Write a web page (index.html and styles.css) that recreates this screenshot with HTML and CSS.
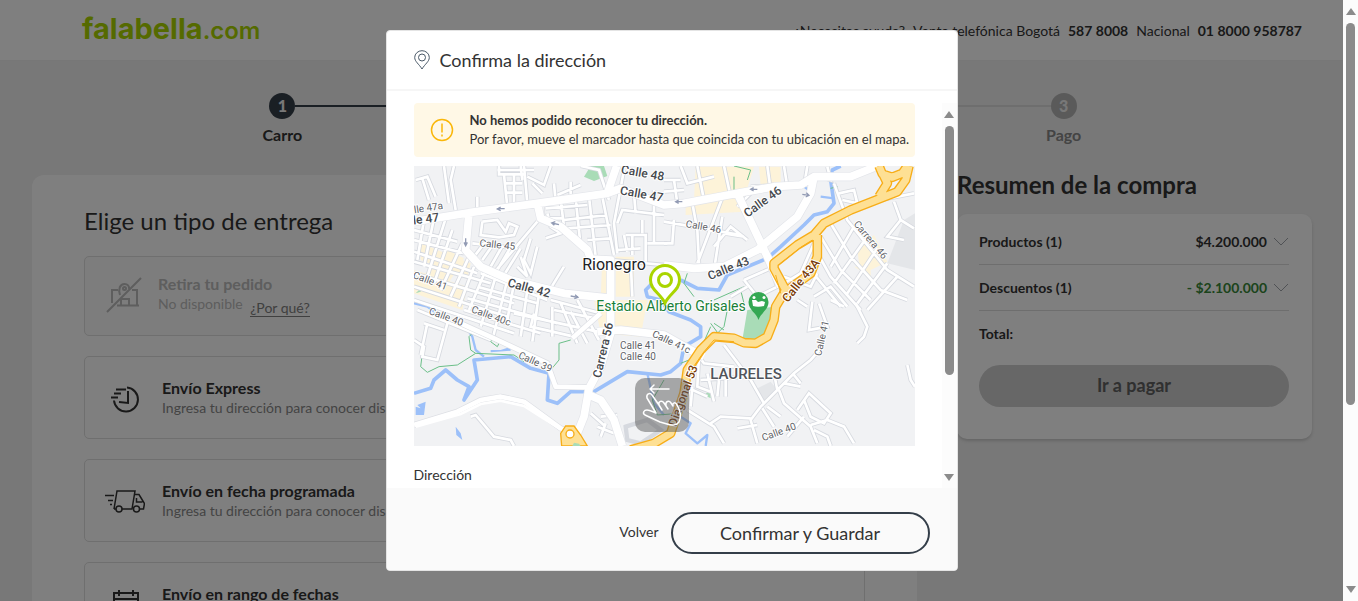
FILE: index.html
```html
<!DOCTYPE html>
<html lang="es">
<head>
<meta charset="utf-8">
<title>falabella.com</title>
<link rel="stylesheet" href="styles.css">
</head>
<body>
<div class="page">
  <header class="topbar">
    <a class="logo" href="#">falabella<span class="logo-com">.com</span></a>
    <div class="help"><span>¿Necesitas ayuda?</span><span>Venta telefónica Bogotá</span><b>587 8008</b><span>Nacional</span><b>01 8000 958787</b></div>
  </header>
  <ol class="steps">
    <li class="step done"><span class="dot">1</span><span>Carro</span></li>
    <li class="step done"><span class="dot"></span></li>
    <li class="step"><span class="dot">3</span><span>Pago</span></li>
  </ol>
  <main class="columns">
    <section class="delivery">
      <h1>Elige un tipo de entrega</h1>
      <div class="option disabled">
        <svg class="icon store" width="36" height="36" viewBox="0 0 36 36"><path d="M1 35 35 1M6 26V13h6M26 13h5v15M11 28.500h22M15 28v-6h8v6" /><path d="M14 18c-2-6 0-11 4.500-11 3 0 5 2 4.500 5"/><circle cx="18.500" cy="11.500" r="1.500"/></svg>
        <div><h2>Retira tu pedido</h2><p>No disponible <a class="why" href="#">¿Por qué?</a></p></div>
      </div>
      <div class="option">
        <svg class="icon express" width="32" height="32" viewBox="0 0 32 32"><path d="M17 5.500a12 12 0 1 1-13 13M18 9v12l-9-1M6 7.500h10M4 11.500h7M1 15.500h7"/></svg>
        <div><h2>Envío Express</h2><p>Ingresa tu dirección para conocer disponibilidad</p></div>
      </div>
      <div class="option">
        <svg class="icon truck" width="40" height="26" viewBox="0 0 40 26"><path d="M9 21 12 3h18l-3 18H17M11 21H9M29 6.500h5l3 5 2.500 4-1 5.500h-3.500M31.500 10v4h6M0 7.500h9M3 12.500h5M5 16.500h2"/><circle cx="14" cy="21" r="3"/><circle cx="31.500" cy="21" r="3"/></svg>
        <div><h2>Envío en fecha programada</h2><p>Ingresa tu dirección para conocer disponibilidad</p></div>
      </div>
      <div class="option">
        <svg class="icon calendar" width="28" height="28" viewBox="0 0 28 28"><path d="M2 3h24v23H2zM2 9h24M7 0v6M21 0v6"/></svg>
        <div><h2>Envío en rango de fechas</h2><p>Ingresa tu dirección para conocer disponibilidad</p></div>
      </div>
    </section>
    <aside class="summary">
      <h2>Resumen de la compra</h2>
      <div class="summary-card">
        <div class="line"><span>Productos (1)</span><span class="amount">$4.200.000</span><svg width="16" height="10" viewBox="0 0 16 10"><path d="m1 1 7 7 7-7"/></svg></div>
        <div class="line"><span>Descuentos (1)</span><span class="amount saving">- $2.100.000</span><svg width="16" height="10" viewBox="0 0 16 10"><path d="m1 1 7 7 7-7"/></svg></div>
        <div class="line"><span>Total:</span></div>
        <button class="pay" type="button" disabled>Ir a pagar</button>
      </div>
    </aside>
  </main>

  <div class="overlay">
    <div class="modal" role="dialog" aria-labelledby="modal-title">
      <div class="modal-head">
        <svg width="16" height="20" viewBox="0 0 16 20"><path d="M8 19C5 14 .7 11.500.7 7.500a7.300 6.800 0 0 1 14.600 0C15.300 11.500 11 14 8 19z"/><circle cx="8" cy="7.500" r="3.500"/></svg>
        <h2 id="modal-title">Confirma la dirección</h2>
      </div>
      <div class="modal-body">
        <div class="modal-content">
          <div class="notice">
            <svg width="24" height="24" viewBox="0 0 24 24"><circle cx="12" cy="12" r="10.500"/><path d="M12 5.500v9M12 16.500v2"/></svg>
            <div><strong>No hemos podido reconocer tu dirección.</strong><p>Por favor, mueve el marcador hasta que coincida con tu ubicación en el mapa.</p></div>
          </div>
          <svg class="map" viewBox="0 0 501 280" role="img" aria-label="Mapa de Rionegro">
            <defs>
              <path id="minor" d="M90 18 105 130M120 18 110 60 125 150M5 60 40 50 65 110M25 55 45 120M190 110v45M250 30h110M255 18v25h75M270 45 280 140M320 18 325 60M300 45v90M330 18 340 130M275 70h50M275 98h50M340 50 390 75 410 18M355 70 385 100M420 70 425 125M470 65v45M430 105 500 75M385 140v35h60M400 160 410 200 440 220 395 235M440 120 450 200M485 115 500 260M525 110 545 290M565 110 600 285M395 145 520 135M450 180 580 165M460 205 590 195M520 240 590 235M205 185 200 225 255 232 300 225 310 200 285 190 275 215 250 180 205 185M370 185 230 350M175 250 310 265M215 245 180 290M240 250 205 300M265 258 230 320M290 262 250 330M320 265 270 345M350 235 330 300 350 340 370 260M320 290 340 350 310 320M410 385 450 320M585 120 555 30 500 18M630 30 600 190 610 280M610 190 625 150 750 165M660 100 665 160M630 225 640 275M635 225h60v80M655 225v60M685 180v40M720 90v160M700 250h60M610 270 680 265M590 300 750 315M650 300 655 410"/>
              <path id="left" d="M0 210 130 245M0 240 150 280M30 180 10 300M60 175 30 320M95 175 40 350M115 210 60 370M145 250 80 390M165 290 110 410M180 320 135 440M215 330 165 450M245 350 200 500M280 360 235 540M0 275 190 340M0 305 230 370M0 340 300 430M0 380 280 470M0 420 300 520M10 450 230 540M300 370 280 480M340 390 320 530M375 400 355 545M200 340 400 420M190 380 370 430M160 415 430 490M150 450 380 520M300 460 550 515M415 440v90M440 430 490 550M470 455 520 550M490 420 555 540M360 460 350 500 480 530M420 450 545 475M410 420 560 460M0 540 30 560 25 590 70 600 100 490M30 490 90 510M40 490 20 585"/>
              <path id="east" d="M800 18 820 70 900 50M850 18 870 120M750 60 800 60M750 95 810 90M780 60 790 130M930 18 950 110M1060 18 1070 90M1110 18 1120 80M1180 18 1170 80M1010 80 1100 75M835 130 850 210 855 310M930 100 850 310M925 170 900 330M750 185 980 225M900 260 950 200 1000 240M780 180 775 250 750 250M930 220 990 230M970 140 1030 80M1200 45 1250 60 1240 20M1260 70 1300 180 1420 330 1500 380M1275 100 1320 90 1330 130 1285 120M1400 120 1500 100M1440 125 1460 180 1420 230 1470 240M1460 180 1500 205M1250 190 1310 290 1400 390 1480 420M1220 230 1280 330 1370 420M1200 260 1250 350 1340 450M1190 330 1280 440M1320 200 1250 320M1360 230 1260 370M1390 265 1300 400M1420 310 1330 430M1450 350 1360 450M1110 370 1160 340 1200 250M1110 350 1190 380 1210 340M1200 410 1250 380 1300 440M990 360 1070 325 1090 380 1030 410 990 360M950 410 1000 380"/>
              <path id="south" d="M1195 425 1185 510 1240 500 1215 430M1180 440 1150 420M1225 560 1190 600 1140 640 1090 690 1040 740 1010 780 1030 850M930 555 1010 660 1050 730M960 620 870 610 855 590M855 590 850 680 890 695M860 660 1000 650M915 660 910 710M935 660 935 710M880 640 900 725M835 680 830 740M815 680 880 710M820 750 900 800 930 850M890 790 920 770 1010 775M970 805 1030 795M1060 740 1100 770M1045 745 1080 800M1095 690 1110 730 1190 800 1210 850M1150 750 1185 700 1250 760 1230 790 1190 770 1170 720M1170 770 1120 830M1190 795 1240 780 1290 800 1320 850M1200 810 1240 830 1250 858M1090 690 1080 640M1140 645 1160 670M1110 670 1160 680M1325 430 1360 500 1350 530 1330 550M1250 420 1290 440M1480 615 1490 660 1503 680M530 760 575 800M560 770 610 765M550 800 600 820M575 790 560 830"/>
              <path id="major" d="M0 185 165 158 370 130 580 100 608 18M580 100 620 85 750 135 810 130 970 100 1080 80 1160 75 1200 50 1310 50 1390 18M165 160 155 270 200 320 290 360 450 400 590 415M370 130 380 175 440 200 520 270 530 297 590 300 590 520 560 620 525 685 510 770 490 820M525 705 560 720 600 780 625 858M750 315 840 325 930 320 1030 270 1150 170 1190 100 1200 50M970 100 1060 290 1100 380M550 515 620 510 750 525 830 570 870 590"/>
              <path id="valley" d="M0 795 130 755 200 720 260 710 330 725 440 805 480 820M140 490 240 535 400 610 425 680 520 682M560 460 475 535"/>
              <path id="highway" d="M1485 18 1475 60 1450 95 1310 150 1230 190 1200 225 1150 255 1080 310 1080 325 1115 390 1085 440 1080 480 1060 530 1025 550 990 548 960 535 900 530 860 570 820 630 810 700 770 820 720 850 650 870M1210 225 1210 290 1190 340 1115 395M1395 18 1405 42 1435 52 1465 40 1480 18M1408 45 1420 70 1395 110"/>
            </defs>
            <rect width="501" height="280" class="land"/>
            <g transform="translate(0 -6) scale(.33333)">
              <path class="cream" d="M845 20h175l-20 65-160 35zM815 125l175-20v50l-175 10zM1035 20h65v60h-60zM565 290h35v150l-40-20zM605 290h55v120h-55zM540 420h160l-20 110-120-10zM20 250l150 60-10 45-140-55zM0 330l160 50-15 70-145-50zM100 270l50 25-50 80-70-30zM1330 270l50-45 40 80-80 40zM1320 320h50v30z"/>
              <path class="gray-area" d="M1420 310 1470 180 1503 160v170zM1020 690l50-25 20 25-40 40z"/>
              <path class="park" d="M510 50 530 18h40l10 30-40 15zM985 540 1000 450 1080 440 1070 500 1045 545zM5 400l20-20-5 15zM870 705l20-15v25z"/>
              <path class="river" d="M1280 18 1255 30 1250 60 1260 130 1240 155 1200 165 1170 195 1100 260 1060 295 940 345 915 390 850 385 800 360M720 365 695 390 700 410 740 420 765 455 830 480 860 500 860 530 810 560 800 610 770 635 740 645 640 635 540 695 470 695 430 730 400 720 405 640 350 625 290 590 180 600 190 660 150 720 165 680 130 660 95 630 60 660 50 685 0 700"/>
              <path class="river thin" d="M0 430 40 440 80 470M155 500 175 530 185 570 210 590M800 770 830 790 815 820 850 850 880 825 875 858M1170 80 1190 95M1220 110 1260 115M700 640 720 730 750 765"/>
              <path class="water" d="M10 735 35 725 30 765 5 765 5 740 20 745zM125 800l15 20 5 20-18-15zM230 570h30l30-10v12l-60 5z"/>
              <path class="trail" d="M960 18 1010 30 1000 60M960 50v60M185 510 165 530 170 570 185 580 300 585 330 605M185 580 130 615 75 620 40 637 20 620 25 580 30 555M470 540 435 550 435 600 410 630 430 680 520 690M230 545 250 560 255 550 235 540zM820 340 810 370 840 410M900 420 990 380M980 390 990 430M940 450 930 500 890 540M900 490 930 510M890 490 920 530M890 500 850 590 800 610M750 660 715 720 730 765 800 760M1260 70 1270 80 1250 85"/>
              <g class="case"><use href="#minor"/><use href="#left"/><use href="#east"/><use href="#south"/></g>
              <g class="street"><use href="#minor"/><use href="#left"/><use href="#east"/><use href="#south"/></g>
              <use href="#major" class="major-case"/><use href="#valley" class="valley-case"/><use href="#valley" class="valley"/><use href="#major" class="major"/>
              <path class="lane" d="M5 800 140 762 200 732 260 722 330 738 440 808"/>
              <path class="case" d="M170 770 185 765 240 830 290 840 300 858M635 800 700 780 740 810 680 850 640 840z"/>
              <path class="lane" d="M170 770 185 765 240 830 290 840 300 858"/>
              <use href="#highway" class="highway-case"/><use href="#highway" class="highway"/>
              <path class="divider" d="M960 545 900 540 870 575 835 625M1100 400 1085 345M1195 240 1160 262 1100 310"/>
              <path class="blob" d="M443 858 440 820 455 798 480 798 500 825 520 858z"/><circle class="hole" cx="468" cy="822" r="12"/><path class="park" d="M475 858l5-10 15 3 5 7z"/>
              <path class="arrow" d="M272 146h-22m10-5-10 6 10 5M435 194l-22-5m11-4-11 4 8 7M155 235v22m-5-10 5 10 5-10M470 408l22 4m-9-8 9 8-11 4M805 125h-20m9-5-9 5 9 5M1030 88h-20m9-5-9 5 9 5M1165 103l20 3m-8-8 8 8-10 5"/>
            </g>
            <g class="labels strong">
              <text transform="translate(228 11) rotate(10)">Calle 48</text><text transform="translate(227 32) rotate(10)">Calle 47</text><text transform="translate(11 57) rotate(-7)">lle 47</text><text transform="translate(114 126) rotate(15)">Calle 42</text><text transform="translate(351 39) rotate(-36)">Calle 46</text><text transform="translate(316 106) rotate(-22)">Calle 43</text><text transform="translate(193 185) rotate(-77)">Carrera 56</text>
            </g>
            <g class="labels">
              <text transform="translate(15 45) rotate(-9)">lle 47a</text><text transform="translate(83 82) rotate(6)">Calle 45</text><text transform="translate(15 118) rotate(20)">Calle 41</text><text transform="translate(31 154) rotate(20)">Calle 40</text><text transform="translate(76 153) rotate(20)">Calle 40c</text><text transform="translate(120 199) rotate(24)">Calle 39</text><text x="224" y="183">Calle 41</text><text x="224" y="194">Calle 40</text><text transform="translate(256 179) rotate(25)">Calle 41c</text><text transform="translate(289 64) rotate(10)">Calle 46</text><text transform="translate(454 76) rotate(50)">Carrera 46</text><text transform="translate(411 173) rotate(-77)">Calle 41</text><text transform="translate(366 269) rotate(-20)">Calle 40</text>
            </g>
            <g class="labels brown"><text transform="translate(390 117) rotate(-51)">Calle 43A</text><text transform="translate(273 231) rotate(-70)">Diagonal 53</text></g>
            <text class="town" x="200" y="104">Rionegro</text>
            <text class="district" x="332" y="213">LAURELES</text>
            <text class="poi" x="257" y="145">Estadio Alberto Grisales</text>
            <path class="poi-pin" d="M344.500 154c-2-7-10-10-10-18a10 10 0 0 1 20 0c0 8-8 11-10 18z"/>
            <path class="poi-mark" d="M338 134h4l2 2 4-1 3 1-1 4c-4 1-8 1-11 0zM346 133l4-1"/><circle class="poi-dot" cx="350" cy="131.500" r="1.500"/><circle class="poi-dot" cx="340" cy="131.500" r="1.500"/>
            <path class="marker" d="M251 137c-5-10-14.500-13-14.500-23a14.500 14.500 0 0 1 29 0c0 10-9.500 13-14.500 23z"/><circle class="marker-ring" cx="251" cy="114" r="6.500"/>
            <rect class="hand-box" x="221" y="212" width="54" height="54" rx="10"/>
            <path class="hand" d="M255 223h-19m4-4-4 4 4 4M242 247l-9-15c-1-4 3-6 5-3l7 10c-1-4 3-5 5-2l2 3c-1-5 3-6 5-3l2 3c-1-4 3-4 4-1 3 5 5 11 2 17-2 3-7 4-12 2l-7-2-15-7c-3-2-1-5 2-5 3 0 6 2 9 3zM245 239l3 5M252 240l2 3"/>
          </svg>
          <label class="field" for="address">Dirección</label>
          <input class="address" id="address" type="text">
        </div>
        <div class="scroll inner" aria-hidden="true"><i class="up"></i><i class="thumb"></i><i class="down"></i></div>
      </div>
      <div class="modal-foot">
        <button class="back" type="button">Volver</button>
        <button class="confirm" type="button">Confirmar y Guardar</button>
      </div>
    </div>
  </div>
</div>
<div class="scroll outer" aria-hidden="true"><i class="up"></i><i class="thumb"></i><i class="down"></i></div>
</body>
</html>
```

FILE: styles.css
```css
* { box-sizing: border-box; margin: 0; padding: 0; }
body { display: flex; height: 100vh; overflow: hidden; font: 14px/20px Lato, "Liberation Sans", sans-serif; color: #333; }
button { font: inherit; color: inherit; border: 0; background: none; }
svg { fill: none; flex: none; }
.page { position: relative; flex: 1; min-width: 0; overflow: hidden; background: #f0f0f0; }

.topbar { display: flex; align-items: center; justify-content: space-between; height: 61px; padding: 0 41px 0 82px; background: #fff; border-bottom: 1px solid #eee; }
.logo { font-family: Inter, Lato, sans-serif; font-weight: 700; font-size: 29px; line-height: 32px; color: #aad500; text-decoration: none; }
.logo-com { font-size: 24px; font-weight: 600; }
.help { display: flex; gap: 8px; padding-top: 2px; }

.steps { display: flex; list-style: none; padding: 32px 84px 0 87px; height: 114px; }
.step { position: relative; flex: 1; display: flex; flex-direction: column; align-items: center; gap: 6px; font-size: 16px; font-weight: 700; color: #888; }
.dot { width: 26px; height: 26px; border-radius: 50%; background: #b4b4b4; color: #f0f0f0; font-weight: 900; line-height: 26px; text-align: center; }
.done { color: #333; }
.done .dot { background: #343e49; }
.step:not(:last-child)::after { content: ""; position: absolute; top: 12px; left: calc(50% + 13px); right: calc(13px - 50%); height: 2px; background: #343e49; }
.step:nth-child(2)::after { background: #dcdcdc; }

.columns { display: flex; align-items: flex-start; gap: 40px; padding: 0 31px 0 32px; }
.delivery { flex: 1; display: flex; flex-direction: column; gap: 20px; min-height: 500px; padding: 31px 52px; background: #fff; border-radius: 12px; }
h1 { font-size: 24px; line-height: 30px; font-weight: 400; }
.option { display: flex; align-items: center; gap: 19px; height: 83px; padding-left: 20px; border: 1px solid #dedede; border-radius: 5px; }
.option.disabled { height: 80px; padding-bottom: 2px; background: #fafafa; color: #bcbcbc; gap: 16px; }
.option h2 { font-size: 16px; line-height: 20px; font-weight: 700; }
.option p { color: #888; line-height: 19px; }
.option.disabled p { color: #bcbcbc; }
.why { display: inline-block; margin-left: 4px; line-height: 16px; color: #808080; text-decoration: none; border-bottom: 1px solid; vertical-align: -4px; }
.icon { stroke: #333; stroke-width: 2; }
.store { stroke: #bcbcbc; margin-left: 1px; }
.express { margin: 0 1px 0 5px; }
.truck { stroke-width: 1.500; margin-right: -2px; }
.calendar { margin: 0 3px 0 7px; }

.summary { width: 355px; }
.summary > h2 { font-size: 24px; line-height: 20px; margin-bottom: 19px; }
.summary-card { padding: 5px 23px 32px 22px; background: #fff; border-radius: 10px; box-shadow: 0 2px 3px #ccc; }
.line { display: flex; align-items: center; gap: 6px; height: 46px; font-weight: 700; border-bottom: 1px solid #dcdcdc; }
.line:nth-child(3) { border: 0; }
.line svg { stroke: #a0a4aa; stroke-width: 1; }
.amount { margin-left: auto; }
.saving { color: #388838; }
.pay { display: block; width: 100%; height: 42px; margin-top: 8px; padding-bottom: 2px; border-radius: 21px; background: #cecece; color: #606060; font-size: 18px; font-weight: 700; }

.overlay { position: absolute; inset: 0; display: flex; align-items: center; justify-content: center; background: rgba(0, 0, 0, .5); }
.modal { display: flex; flex-direction: column; width: 572px; height: 90vh; background: #fff; border: 1px solid #e4e4e4; border-radius: 4px; overflow: hidden; }
.modal-head { flex: none; display: flex; align-items: center; gap: 10px; height: 60px; padding-left: 27px; border-bottom: 2px solid #f6f6f6; }
.modal-head svg { stroke: #495867; stroke-width: 1; }
.modal-head h2 { font-size: 18px; font-weight: 400; }
.modal-body { flex: 1; min-height: 0; display: flex; justify-content: space-between; padding-top: 12px; }
.modal-content { flex: 1; min-width: 0; overflow: hidden; padding: 0 27px; }
.notice { display: flex; align-items: center; gap: 16px; height: 54px; padding-left: 16px; margin-bottom: 9px; background: #fff8e6; border-radius: 4px; font-size: 13px; line-height: 19px; white-space: nowrap; }
.notice svg { stroke: #fab70a; stroke-width: 1.500; }
.map { display: block; width: 100%; }
.field { display: block; margin-top: 19px; }
.address { width: 100%; height: 40px; margin-top: 8px; border: 1px solid #ccc; border-radius: 4px; }
.modal-foot { flex: none; display: flex; align-items: center; justify-content: flex-end; gap: 12px; height: 82px; padding: 9px 27px 0 0; background: #fafafa; }
.back { padding-bottom: 3px; }
.confirm { width: 259px; height: 42px; border: 2px solid #343e49; border-radius: 21px; font-size: 18px; }

.scroll { flex: none; display: flex; flex-direction: column; align-items: center; width: 15px; background: #fcfcfc; }
.up, .down { border: 5px solid transparent; border-top: 0; border-bottom: 7px solid #8b8b8b; }
.down { margin-top: auto; transform: rotate(180deg); }
.thumb { width: 9px; border-radius: 5px; background: #8b8b8b; margin-top: 8px; }
.outer { padding: 8px 0; }
.outer .thumb { height: 382px; }
.inner { padding: 8px 0 7px; }
.inner .thumb { height: 249px; }

.land { fill: #f1f2f4; }
.cream { fill: #fdf3d9; }
.gray-area { fill: #e4e6e9; }
.park { fill: #a9dcb7; }
.water { fill: #9cc0f9; }
.river { stroke: #9cc0f9; stroke-width: 11; stroke-linejoin: round; }
.thin { stroke-width: 7; }
.trail { stroke: #6abf88; stroke-width: 3; }
.case { stroke: #d6d9df; stroke-width: 13; }
.street { stroke: #fff; stroke-width: 8; }
.lane { stroke: #fff; stroke-width: 8; }
.valley-case { stroke: #dddfe4; stroke-width: 18; stroke-linejoin: round; }
.valley { stroke: #fff; stroke-width: 14; stroke-linejoin: round; }
.major-case { stroke: #e3e5ea; stroke-width: 27; stroke-linejoin: round; }
.major { stroke: #fff; stroke-width: 23; stroke-linejoin: round; }
.highway-case { stroke: #f7ad18; stroke-width: 29; stroke-linejoin: round; }
.highway { stroke: #fee094; stroke-width: 21; stroke-linejoin: round; }
.divider { stroke: #f7ad18; stroke-width: 3; }
.blob { fill: #fee094; stroke: #f7ad18; stroke-width: 4; }
.hole { fill: #fff; stroke: #f7ad18; stroke-width: 4; }
.arrow { stroke: #929bb4; stroke-width: 4; }
.map text { font-family: Roboto, sans-serif; text-anchor: middle; paint-order: stroke; stroke: #fff; stroke-width: 2px; stroke-linejoin: round; }
.labels { font-size: 10px; fill: #5f6368; }
.strong { font-size: 12px; font-weight: 500; fill: #45484d; }
.brown { font-size: 12px; font-weight: 500; fill: #7a3c08; }
.town { font-size: 16px; fill: #202124; }
.district { font-size: 15px; font-weight: 500; fill: #50545a; }
.poi { font-size: 14px; fill: #188038; }
.poi-pin { fill: #34a853; }
.poi-mark, .poi-dot { fill: #fff; }
.marker { fill: #fff; stroke: #aad500; stroke-width: 3; }
.marker-ring { stroke: #aad500; stroke-width: 3; }
.hand-box { fill: rgba(90, 90, 90, .5); }
.hand { stroke: #fff; stroke-width: 1.500; stroke-linejoin: round; stroke-linecap: round; }
```
